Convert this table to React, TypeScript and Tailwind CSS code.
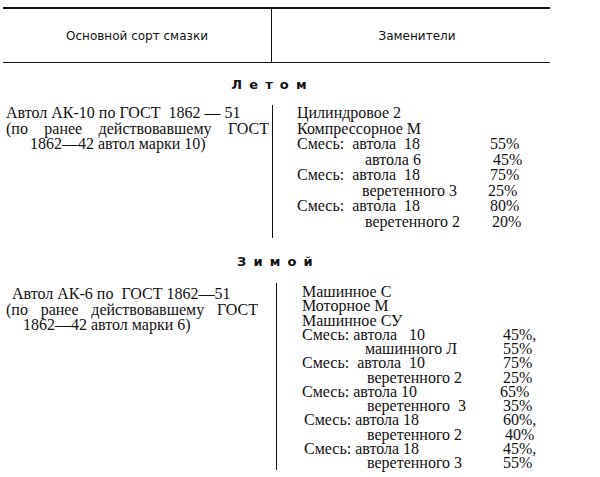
import React from 'react';

type Mix = { name: string; pct?: string; nameCls?: string; pctCls?: string };

const summer: Mix[] = [
  { name: 'Цилиндровое 2' },
  { name: 'Компрессорное М' },
  { name: 'Смесь:  автола  18', pct: '55%' },
  { name: 'автола 6', pct: '45%', nameCls: 'pl-[68px]', pctCls: 'pl-[3px]' },
  { name: 'Смесь:  автола  18', pct: '75%' },
  { name: 'веретенного 3', pct: '25%', nameCls: 'pl-[65px]', pctCls: '-ml-[2px]' },
  { name: 'Смесь:  автола  18', pct: '80%' },
  { name: 'веретенного 2', pct: '20%', nameCls: 'pl-[68px]', pctCls: 'pl-[2px]' },
];

const winter: Mix[] = [
  { name: 'Машинное С' },
  { name: 'Моторное М' },
  { name: 'Машинное СУ' },
  { name: 'Смесь: автола   10', pct: '45%,' },
  { name: 'машинного Л', pct: '55%', nameCls: 'pl-[63px]' },
  { name: 'Смесь:  автола  10', pct: '75%' },
  { name: 'веретенного 2', pct: '25%', nameCls: 'pl-[65px]' },
  { name: 'Смесь: автола 10', pct: '65%', pctCls: '-ml-[3px]' },
  { name: 'веретенного  3', pct: '35%', nameCls: 'pl-[65px]' },
  { name: 'Смесь: автола 18', pct: '60%,', nameCls: 'pl-[2px]' },
  { name: 'веретенного 2', pct: '40%', nameCls: 'pl-[65px]', pctCls: 'pl-[2px]' },
  { name: 'Смесь: автола 18', pct: '45%,', nameCls: 'pl-[2px]' },
  { name: 'веретенного 3', pct: '55%', nameCls: 'pl-[65px]' },
];

function Rows({ rows, nameWidth }: { rows: Mix[]; nameWidth: string }) {
  return (
    <>
      {rows.map((r, i) => (
        <div key={i} className="flex whitespace-pre">
          <div className={`${nameWidth} shrink-0 ${r.nameCls ?? ''}`}>{r.name}</div>
          {r.pct && <div className={r.pctCls ?? ''}>{r.pct}</div>}
        </div>
      ))}
    </>
  );
}

function SeasonTitle({ children, width }: { children: string; width: string }) {
  return (
    <div className={`${width} flex justify-center`}>
      <span className="font-['DejaVu_Sans',sans-serif] font-bold text-[13px] leading-[16px] tracking-[0.55em]">
        {children}
      </span>
    </div>
  );
}

export default function App() {
  return (
    <div className="w-[600px] h-[477px] overflow-hidden bg-white text-[#111] font-['Liberation_Serif',serif] text-[16px]">
      {/* table head */}
      <div className="ml-[3px] mt-[7px] w-[547px] h-[56px] flex border-t-2 border-b-[1.5px] border-[#111] font-['DejaVu_Sans',sans-serif] text-[12px]">
        <div className="w-[269px] flex items-center justify-center border-r border-[#111]">
          Основной сорт смазки
        </div>
        <div className="flex-1 flex items-center justify-center pl-[12px]">Заменители</div>
      </div>

      <div className="mt-[14px]">
        <SeasonTitle width="w-[545px]">Летом</SeasonTitle>
      </div>

      {/* summer */}
      <div className="mt-[12px] flex leading-[15.5px]">
        <div className="w-[272px] shrink-0 pl-[6px]">
          <div className="whitespace-pre">Автол АК-10 по ГОСТ  1862 — 51</div>
          <div className="w-[263px] flex justify-between">
            <span>(по</span>
            <span>ранее</span>
            <span>действовавшему</span>
            <span>ГОСТ</span>
          </div>
          <div className="pl-[24px]">1862—42 автол марки 10)</div>
        </div>
        <div className="border-l-[1.5px] border-[#111] pl-[24px] pb-[9px]">
          <Rows rows={summer} nameWidth="w-[193px]" />
        </div>
      </div>

      <div className="mt-[16px]">
        <SeasonTitle width="w-[557px]">Зимой</SeasonTitle>
      </div>

      {/* winter */}
      <div className="mt-[13px] flex">
        <div className="w-[276px] shrink-0 pl-[6px] pt-[3px] leading-[15.5px]">
          <div className="pl-[6px] whitespace-pre">Автол АК-6 по  ГОСТ 1862—51</div>
          <div className="w-[252px] flex justify-between">
            <span>(по</span>
            <span>ранее</span>
            <span>действовавшему</span>
            <span>ГОСТ</span>
          </div>
          <div className="pl-[17px]">1862—42 автол марки 6)</div>
        </div>
        <div className="border-l-[1.5px] border-[#111] pl-[25px] pt-[2px] leading-[14.25px]">
          <Rows rows={winter} nameWidth="w-[201px]" />
        </div>
      </div>
    </div>
  );
}
